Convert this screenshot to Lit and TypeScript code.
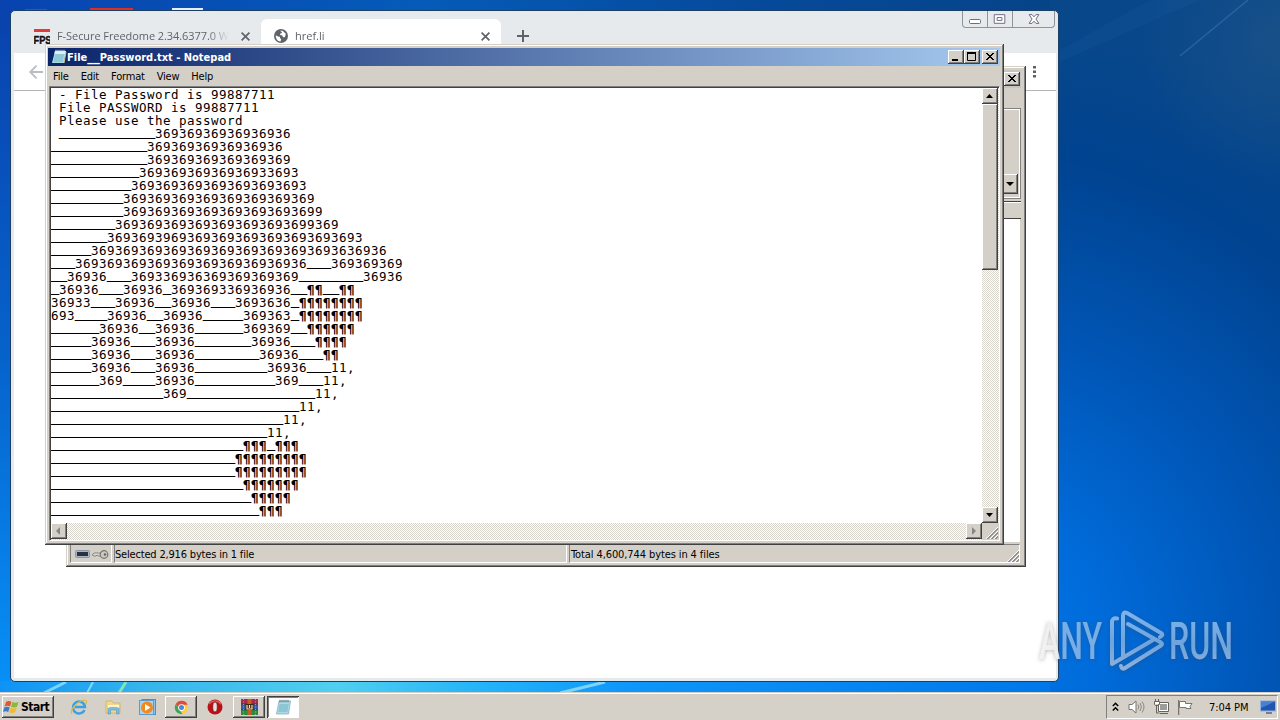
import { LitElement, html, css, svg } from 'lit';
import { customElement, property } from 'lit/decorators.js';
import { classMap } from 'lit/directives/class-map.js';

const u = (n: number) => '_'.repeat(n);
const p = (n: number) => '¶'.repeat(n);

const LINES: string[] = [
  ' - File Password is 99887711',
  ' File PASSWORD is 99887711',
  ' Please use the password',
  ` ${u(12)}36936936936936936`,
  `${u(12)}36936936936936936`,
  `${u(12)}369369369369369369`,
  `${u(11)}36936936936936933693`,
  `${u(10)}3693693693693693693693`,
  `${u(9)}369369369369369369369369`,
  `${u(9)}3693693693693693693693699`,
  `${u(8)}3693693693693693693693699369`,
  `${u(7)}36936939693693693693693693693693`,
  `${u(5)}3693693693693693693693693693693636936`,
  `${u(3)}36936936936936936936936936936${u(3)}369369369`,
  `${u(2)}36936${u(3)}369336936369369369369${u(8)}36936`,
  `_36936${u(3)}36936_369369336936936__${p(2)}__${p(2)}`,
  `36933${u(3)}36936__36936${u(3)}3693636_${p(8)}`,
  `693${u(4)}36936__36936${u(5)}369363_${p(8)}`,
  `${u(6)}36936__36936${u(6)}369369__${p(6)}`,
  `${u(5)}36936${u(3)}36936${u(7)}36936${u(3)}${p(4)}`,
  `${u(5)}36936${u(3)}36936${u(8)}36936${u(3)}${p(2)}`,
  `${u(5)}36936${u(3)}36936${u(9)}36936${u(3)}11,`,
  `${u(6)}369${u(4)}36936${u(10)}369${u(3)}11,`,
  `${u(14)}369${u(16)}11,`,
  `${u(31)}11,`,
  `${u(29)}11,`,
  `${u(27)}11,`,
  `${u(24)}${p(3)}_${p(3)}`,
  `${u(23)}${p(9)}`,
  `${u(23)}${p(9)}`,
  `${u(24)}${p(7)}`,
  `${u(25)}${p(5)}`,
  `${u(26)}${p(3)}`,
];

const classic = css`
  * {
    box-sizing: border-box;
  }
  .raised {
    background: #d4d0c8;
    box-shadow: inset -1px -1px #404040, inset 1px 1px #fff,
      inset -2px -2px #808080;
  }
  .frame {
    background: #d4d0c8;
    box-shadow: inset -1px -1px #404040, inset 1px 1px #d4d0c8,
      inset -2px -2px #808080, inset 2px 2px #fff;
  }
  svg {
    display: block;
    flex: none;
  }
`;

const grip = svg`
  <path d="M4 16L16 4M8 16L16 8M12 16L16 12" stroke="#fff" stroke-width="1" />
  <path d="M5 16L16 5M6 16L16 6M9 16L16 9M10 16L16 10M13 16L16 13M14 16L16 14" stroke="#8c8984" stroke-width=".9" />
`;

@customElement('desktop-wallpaper')
export class DesktopWallpaper extends LitElement {
  static override styles = css`
    :host {
      display: block;
      width: 1280px;
      height: 720px;
    }
    svg {
      display: block;
    }
  `;

  render() {
    return html`
      <svg width="1280" height="720" viewBox="0 0 1280 720">
        <defs>
          <linearGradient id="left" x1="0" y1="0" x2="0" y2="1">
            <stop offset="0" stop-color="#0a41ac" />
            <stop offset=".5" stop-color="#0663cc" />
            <stop offset="1" stop-color="#0795fb" />
          </linearGradient>
          <linearGradient id="top">
            <stop offset="0" stop-color="#0843b0" />
            <stop offset=".4" stop-color="#055bb8" />
            <stop offset=".7" stop-color="#064a9c" />
            <stop offset="1" stop-color="#064488" />
          </linearGradient>
          <linearGradient id="bottom">
            <stop offset="0" stop-color="#0d93f6" />
            <stop offset=".14" stop-color="#36b5ec" />
            <stop offset=".32" stop-color="#50cff0" />
            <stop offset=".46" stop-color="#24b3f8" />
            <stop offset=".6" stop-color="#0e96fa" />
            <stop offset="1" stop-color="#0077e8" />
          </linearGradient>
          <radialGradient id="right" gradientUnits="userSpaceOnUse" cx="960" cy="640" r="620">
            <stop offset="0" stop-color="#0078ea" />
            <stop offset=".22" stop-color="#006cdb" />
            <stop offset=".5" stop-color="#0056b6" />
            <stop offset=".8" stop-color="#004390" />
            <stop offset="1" stop-color="#08478a" />
          </radialGradient>
          <radialGradient id="corner" gradientUnits="userSpaceOnUse" cx="1280" cy="40" r="140">
            <stop offset="0" stop-color="#1c5288" stop-opacity=".8" />
            <stop offset="1" stop-color="#1c5288" stop-opacity="0" />
          </radialGradient>
        </defs>
        <rect width="600" height="720" fill="url(#left)" />
        <rect width="1060" height="11" fill="url(#top)" />
        <rect y="681" width="1050" height="14" fill="url(#bottom)" />
        <rect x="1050" width="230" height="720" fill="url(#right)" />
        <rect x="1130" width="150" height="190" fill="url(#corner)" />
        <path d="M1180 56L1248 0" stroke="#3a78b0" stroke-width="1.5" opacity=".55" />
        <path d="M1060 50L1150 0H1200L1060 62z" fill="#2c6cae" opacity=".12" />
        <path d="M44 693L66 682M560 693L605 682" stroke="#b4f0ff" stroke-width="3" opacity=".65" />
        <path d="M87 693L93 682" stroke="#a8f0ff" stroke-width="2" opacity=".7" />
        <path d="M119 693L126 682" stroke="#9cf0a8" stroke-width="3" opacity=".8" />
        <path d="M90 8h43v3H90z" fill="#dc2f26" />
        <path d="M25 9.500h22" stroke="#37589a" />
        <path d="M172 8h31v2.500h-31z" fill="#e6eef8" />
      </svg>
    `;
  }
}

@customElement('browser-window')
export class BrowserWindow extends LitElement {
  static override styles = css`
    :host,
    * {
      box-sizing: border-box;
    }
    :host {
      display: flex;
      flex-direction: column;
      border: 1px solid #1c3f66;
      border-radius: 5px;
      background: #e7eaed;
      padding: 0 2px 3px 3px;
      overflow: hidden;
      font: 11px 'Open Sans', sans-serif;
      color: #5f6368;
    }
    .strip {
      display: flex;
      height: 42px;
      flex: none;
      padding: 8px 0 0 7px;
    }
    .tab {
      display: flex;
      align-items: center;
      width: 240px;
      height: 34px;
      padding: 0 11px 0 13px;
      border-radius: 6px 6px 0 0;
    }
    .tab.active {
      background: #fff;
    }
    .title {
      flex: 1;
      margin: -2px 12px 0 7px;
      overflow: hidden;
      white-space: nowrap;
      -webkit-mask-image: linear-gradient(90deg, #000 88%, transparent);
    }
    .title.long {
      letter-spacing: -0.07px;
    }
    svg {
      display: block;
      flex: none;
    }
    .plus {
      margin: 11px 0 0 16px;
    }
    .controls {
      display: flex;
      width: 93px;
      height: 17px;
      margin: -8px 1px 0 auto;
      border: 1px solid #8d949e;
      border-top: 0;
      border-radius: 0 0 4px 4px;
    }
    .controls svg + svg {
      border-left: 1px solid #8d949e;
    }
    .toolbar {
      display: flex;
      justify-content: space-between;
      align-items: center;
      flex: none;
      height: 38px;
      padding: 0 20px 0 15px;
      background: #fff;
      border-bottom: 1px solid #b5b5b5;
    }
    .page {
      flex: 1;
      background: #fff;
    }
  `;

  cross() {
    return html`
      <svg width="9" height="9" viewBox="0 0 9 9">
        <path d="M.6.6l7.800 7.800M8.400.6L.6 8.400" stroke="#5f6368" stroke-width="1.700" />
      </svg>
    `;
  }

  render() {
    return html`
      <div class="strip">
        <div class="tab">
          <svg width="16" height="16" viewBox="0 0 16 16">
            <rect width="16" height="3" y="1" fill="#e5383a" />
            <text x="-.5" y="15.500" textLength="18" lengthAdjust="spacingAndGlyphs" font-family="Liberation Sans" font-weight="700" font-size="11" fill="#111" stroke="#111" stroke-width=".4">FPS</text>
          </svg>
          <div class="title long">F-Secure Freedome 2.34.6377.0 Windows</div>
          ${this.cross()}
        </div>
        <div class="tab active">
          <svg width="14" height="14" viewBox="0 0 14 14">
            <circle cx="7" cy="7" r="7" fill="#5f6368" />
            <path d="M1.800 6.200L4 7.500l2 .3v1.500l1.200.8-.6 2.400C3.800 12.300 1.500 9.800 1.800 6.200zM6 1.700l2.600.1 3.200 3-.8 3.200-2 .2-.6-1.600-2.300-.5.2-1.500 1.700-.6-.3-1.100z" fill="#fff" />
          </svg>
          <div class="title">href.li</div>
          ${this.cross()}
        </div>
        <svg class="plus" width="12" height="12" viewBox="0 0 12 12">
          <path d="M6 0v12M0 6h12" stroke="#5f6368" stroke-width="2" />
        </svg>
        <div class="controls">
          <svg width="24" height="16" viewBox="0 0 24 16">
            <rect x="6.500" y="8.500" width="11" height="4" rx="1" fill="#fff" stroke="#696c83" />
          </svg>
          <svg width="25" height="16" viewBox="0 0 25 16">
            <path d="M6.500 3.500h11v9h-11zM9.500 6.500h5v3h-5z" fill="#fff" stroke="#696c83" />
          </svg>
          <svg width="42" height="16" viewBox="0 0 42 16">
            <path d="M16.500 3.500h3l2 2.300 2-2.300h3l-3 4.500 3 4.500h-3l-2-2.300-2 2.300h-3l3-4.500z" fill="#fff" stroke="#696c83" />
          </svg>
        </div>
      </div>
      <div class="toolbar">
        <svg width="14" height="14" viewBox="0 0 14 14">
          <path d="M14 7H1M7.500.7L1.200 7l6.300 6.300" fill="none" stroke="#b9bcc0" stroke-width="1.800" />
        </svg>
        <svg width="3" height="14" viewBox="0 0 3 14">
          <path d="M0 1h3v2.500H0zM0 5.500h3V8H0zM0 10h3v2.500H0z" fill="#5f6368" />
        </svg>
      </div>
      <div class="page"></div>
    `;
  }
}

@customElement('archive-window')
export class ArchiveWindow extends LitElement {
  static override styles = [
    classic,
    css`
      :host {
        display: flex;
        font: 11px 'DejaVu Sans Condensed', 'DejaVu Sans', sans-serif;
        color: #000;
      }
      .frame {
        flex: 1;
        display: flex;
        flex-direction: column;
        padding: 4px 5px 4px 4px;
      }
      .caption {
        display: flex;
        justify-content: flex-end;
        align-items: center;
        height: 18px;
        padding-right: 1px;
        background: #c9c5be;
      }
      .close {
        width: 16px;
        height: 14px;
      }
      .tools {
        height: 91px;
        margin-top: 20px;
        border: 1px solid #808080;
        box-shadow: inset -1px -1px #fff, inset 1px 1px #fff;
        display: flex;
        justify-content: flex-end;
        align-items: flex-end;
        padding: 0 2px 4px 0;
      }
      .drop {
        width: 16px;
        height: 20px;
      }
      .header {
        height: 18px;
        margin-top: 2px;
        border-top: 1px solid #404040;
        border-bottom: 1px solid #404040;
        box-shadow: inset 0 1px #fff;
      }
      .list {
        flex: 1;
        background: #fff;
        border-right: 1px solid #d4d0c8;
      }
      .status {
        display: flex;
        gap: 2px;
        height: 21px;
        margin-right: 1px;
        padding-top: 2px;
      }
      .cell {
        display: flex;
        align-items: center;
        padding-top: 1px;
        border: 1px solid #808080;
        border-right-color: #fff;
        border-bottom-color: #fff;
        letter-spacing: -0.18px;
        white-space: nowrap;
      }
      .icons {
        width: 42px;
        padding-left: 4px;
        gap: 2px;
      }
      .selected {
        width: 453px;
      }
      .total {
        flex: 1;
        justify-content: space-between;
        padding-left: 1px;
        letter-spacing: -0.1px;
      }
    `,
  ];

  render() {
    return html`
      <div class="frame">
        <div class="caption">
          <svg class="close raised" viewBox="0 0 16 14">
            <path d="M4 3l7 7M5 3l7 7M11 3l-7 7M12 3l-7 7" stroke="#000" />
          </svg>
        </div>
        <div class="tools">
          <svg class="drop raised" viewBox="0 0 16 20">
            <path d="M4 8h8l-4 4z" />
          </svg>
        </div>
        <div class="header"></div>
        <div class="list"></div>
        <div class="status">
          <div class="cell icons">
            <svg width="15" height="9" viewBox="0 0 15 9">
              <rect x=".5" y=".5" width="14" height="7" rx="1" fill="#a9b4c6" stroke="#8a95a8" />
              <rect x="2" y="2" width="11" height="4" fill="#27313f" />
            </svg>
            <svg width="18" height="11" viewBox="0 0 18 11">
              <path d="M10 4H2L0 6l2 1h2l1-1 1 1h4z" fill="#d8d8d2" stroke="#77756f" stroke-width=".8" />
              <circle cx="12" cy="5.500" r="3.800" fill="#c9c9c4" stroke="#77756f" stroke-width="1.200" />
              <circle cx="13" cy="5.500" r="1.200" fill="#66645f" />
            </svg>
          </div>
          <div class="cell selected">Selected 2,916 bytes in 1 file</div>
          <div class="cell total">
            Total 4,600,744 bytes in 4 files
            <svg width="14" height="16" viewBox="2 0 14 16">${grip}</svg>
          </div>
        </div>
      </div>
    `;
  }
}

@customElement('notepad-window')
export class NotepadWindow extends LitElement {
  static override styles = [
    classic,
    css`
      :host {
        display: flex;
        font: 11px 'DejaVu Sans Condensed', 'DejaVu Sans', sans-serif;
        color: #000;
      }
      .frame {
        flex: 1;
        display: flex;
        flex-direction: column;
        padding: 4px 4px 4px 3px;
      }
      .caption {
        display: flex;
        align-items: center;
        height: 18px;
        padding: 0 2px 0 3px;
        background: linear-gradient(90deg, #0a246a, #a6caf0);
        color: #fff;
        font-weight: bold;
      }
      .name {
        flex: 1;
        white-space: nowrap;
      }
      .name span {
        font-size: 14px;
        line-height: 0;
      }
      .btn {
        width: 16px;
        height: 14px;
      }
      .btn:last-child {
        margin-left: 2px;
      }
      .menu {
        display: flex;
        align-items: center;
        height: 20px;
        padding-left: 5px;
        gap: 12px;
        letter-spacing: -0.2px;
      }
      .edit {
        flex: 1;
        display: grid;
        grid-template-columns: 1fr 17px;
        grid-template-rows: 1fr 17px;
        margin-left: 1px;
        border: 1px solid #808080;
        border-right-color: #fff;
        border-bottom-color: #fff;
        box-shadow: inset 1px 1px #404040;
        padding: 1px 0 0 1px;
      }
      .text {
        background: #fff;
        overflow: hidden;
        font: 12.5px/13px 'DejaVu Sans Mono', monospace;
        letter-spacing: 0.475px;
      }
      .line {
        height: 13px;
        white-space: pre;
      }
      .rule {
        font: 13.33px/0 'Liberation Mono', monospace;
        letter-spacing: 0;
        vertical-align: 1px;
        -webkit-text-stroke: 0.4px #000;
      }
      .pilcrow {
        font-weight: bold;
      }
      .bar {
        display: flex;
        background: repeating-conic-gradient(#fff 0 25%, #d8d5cd 0 50%) 0 0 / 2px
          2px;
      }
      .bar.v {
        flex-direction: column;
      }
      .bar svg {
        width: 16px;
        height: 16px;
      }
      .bar svg:last-child {
        margin: auto 0 0;
      }
      .bar.h svg:last-child {
        margin: 0 0 0 auto;
      }
      .thumb {
        width: 16px;
        height: 166px;
      }
    `,
  ];

  renderLine(line: string) {
    const runs = line.match(/_+|¶+|[^_¶]+/g) ?? [];
    return html`<div class="line">${runs.map(
      (run) =>
        html`<span
          class=${classMap({ rule: run[0] === '_', pilcrow: run[0] === '¶' })}
          >${run}</span
        >`
    )}</div>`;
  }

  render() {
    return html`
      <div class="frame">
        <div class="caption">
          <svg width="16" height="16" viewBox="0 0 16 16">
            <path d="M4 2h11l-2 12H1z" fill="#a9dbe6" />
            <path d="M4 2h11l-.5 3h-11z" fill="#d9f2f5" />
            <path d="M4 6h9M3.500 8h9M3 10h9M3 12h9" stroke="#62a7ba" stroke-width=".7" />
            <path d="M5 .8v2M7 .8v2M9 .8v2M11 .8v2M13 .8v2" stroke="#e8e8e8" />
            <path d="M13 14l2-11" stroke="#cfc08a" />
          </svg>
          <div class="name">File<span>__</span>Password.txt - Notepad</div>
          <svg class="btn raised" viewBox="0 0 16 14">
            <path d="M4 9h6v2H4z" />
          </svg>
          <svg class="btn raised" viewBox="0 0 16 14">
            <path d="M3.500 2.500h8v8h-8z" fill="none" stroke="#000" />
            <path d="M3 2h9v2H3z" />
          </svg>
          <svg class="btn raised" viewBox="0 0 16 14">
            <path d="M4 3l7 7M5 3l7 7M11 3l-7 7M12 3l-7 7" stroke="#000" />
          </svg>
        </div>
        <div class="menu">
          ${['File', 'Edit', 'Format', 'View', 'Help'].map(
            (item) => html`<span>${item}</span>`
          )}
        </div>
        <div class="edit">
          <div class="text">${LINES.map((line) => this.renderLine(line))}</div>
          <div class="bar v">
            <svg class="raised" viewBox="0 0 16 16">
              <path d="M4 10h7L7.500 6z" />
            </svg>
            <div class="thumb raised"></div>
            <svg class="raised" viewBox="0 0 16 16">
              <path d="M4 6h7L7.500 10z" />
            </svg>
          </div>
          <div class="bar h">
            <svg class="raised" viewBox="0 0 16 16">
              <path d="M9 4v8L5 8z" fill="#858585" />
            </svg>
            <svg class="raised" viewBox="0 0 16 16">
              <path d="M6 4v8l4-4z" fill="#858585" />
            </svg>
          </div>
          <svg width="17" height="17" viewBox="0 0 17 17">${grip}</svg>
        </div>
      </div>
    `;
  }
}

@customElement('task-button')
export class TaskButton extends LitElement {
  static override styles = [
    classic,
    css`
      :host {
        display: block;
      }
      .btn {
        display: flex;
        align-items: center;
        justify-content: center;
        width: 32px;
        height: 22px;
      }
      .pressed {
        background: #fff;
        box-shadow: inset 1px 1px #404040, inset -1px -1px #fff,
          inset 2px 2px #808080;
      }
    `,
  ];

  @property({ type: Boolean }) pressed = false;

  @property({ type: Boolean }) running = false;

  render() {
    return html`
      <div
        class=${classMap({
          btn: true,
          raised: this.running && !this.pressed,
          pressed: this.pressed,
        })}
      >
        <slot></slot>
      </div>
    `;
  }
}

@customElement('task-bar')
export class TaskBar extends LitElement {
  static override styles = [
    classic,
    css`
      :host {
        display: flex;
        align-items: flex-start;
        background: #d5d0c8;
        border-top: 1px solid #d4d0c8;
        box-shadow: inset 0 1px #fff;
        padding: 3px 2px 0;
        font: 11px 'DejaVu Sans Condensed', 'DejaVu Sans', sans-serif;
        color: #000;
      }
      .start {
        display: flex;
        align-items: center;
        gap: 1px;
        width: 52px;
        height: 22px;
        padding-left: 1px;
        font-size: 12px;
        font-weight: bold;
        letter-spacing: -0.5px;
      }
      .apps {
        display: flex;
        gap: 2px;
        padding-left: 9px;
      }
      .tray {
        display: flex;
        align-items: center;
        width: 172px;
        height: 24px;
        margin: -1px 0 0 auto;
        padding: 0 0 0 5px;
        border: 1px solid #808080;
        border-right-color: #fff;
        border-bottom-color: #fff;
      }
      .clock {
        margin: 0 11px 0 16px;
        letter-spacing: -0.05px;
        white-space: nowrap;
      }
      .tray svg + svg {
        margin-left: 8px;
      }
    `,
  ];

  render() {
    return html`
      <div class="start raised">
        <svg width="17" height="16" viewBox="0 0 17 16">
          <path d="M3 3c2-1.500 4-1 5.500 0L7 7.500C5.500 6.500 3.500 6.500 1.500 7.500z" fill="#e4572b" />
          <path d="M9.500 3c2 1 4 1 6 0L14 7.700c-2 1-4 1-6 0z" fill="#86b93c" />
          <path d="M1.200 8.500c2-1 4-1 5.500 0L5.200 13c-1.700-1-3.500-1-5.200 0z" fill="#3b7cc9" />
          <path d="M7.700 8.700c2 1 4 1 6 0l-1.500 4.600c-2 1-4 1-6 0z" fill="#f3b929" />
        </svg>
        Start
      </div>
      <div class="apps">
        <task-button>
          <svg width="18" height="18" viewBox="0 0 18 18">
            <path d="M14.500 12A6 6 0 1 1 15 9H5" fill="none" stroke="#3ba1e0" stroke-width="2.400" />
            <path d="M2 16C-1 12 8 3 14 2c3 0 3 2 2 4" fill="none" stroke="#e3b93c" stroke-width="1.200" />
          </svg>
        </task-button>
        <task-button>
          <svg width="17" height="16" viewBox="0 0 17 16">
            <path d="M1 2h6l1 2h7v10H1z" fill="#f1d88c" stroke="#cfae58" stroke-width=".7" />
            <path d="M3 6h11v3H3z" fill="#fff6cf" />
            <path d="M3 15V9.500C3 8 14 8 14 9.500V15h-2.500v-4h-6v4z" fill="#7cbfe6" stroke="#4f93c2" stroke-width=".6" />
          </svg>
        </task-button>
        <task-button>
          <svg width="17" height="17" viewBox="0 0 17 17">
            <rect x="3" y=".5" width="13.500" height="15" fill="#8fc4ec" stroke="#4c8fc8" />
            <rect x=".5" y="1.500" width="14" height="14" fill="#a9d3f2" stroke="#5a9bd0" />
            <circle cx="8" cy="8.500" r="6" fill="#f08a1d" />
            <path d="M6 5l5.500 3.500L6 12z" fill="#fff" />
          </svg>
        </task-button>
        <task-button running>
          <svg width="15" height="15" viewBox="0 0 16 16">
            <circle cx="8" cy="8" r="7" fill="#f9cf3b" />
            <path d="M2 4.300A7 7 0 0 1 14.500 5H8L5 9.500z" fill="#de4b3c" />
            <path d="M2 4.300L5.300 10 9 15A7 7 0 0 1 2 4.300z" fill="#3ba45b" />
            <circle cx="8" cy="8" r="3.600" fill="#fff" />
            <circle cx="8" cy="8" r="2.700" fill="#4a87e0" />
          </svg>
        </task-button>
        <task-button>
          <svg width="16" height="16" viewBox="0 0 16 16">
            <circle cx="8" cy="8" r="7.500" fill="#b81218" />
            <path d="M2 5a7 6 0 0 1 12 0" fill="none" stroke="#d95a58" stroke-width="1.500" />
            <ellipse cx="8" cy="8" rx="2.300" ry="5" fill="#e8e0de" stroke="#650a0c" stroke-width=".7" />
          </svg>
        </task-button>
        <task-button running>
          <svg width="17" height="16" viewBox="0 0 17 16">
            <path d="M0 0h17v5H0z" fill="#a8284e" />
            <path d="M0 5.500h17v5H0z" fill="#3a55b0" />
            <path d="M0 11h17v5H0z" fill="#2f8a3d" />
            <path d="M0 5.300h17M0 10.700h17" stroke="#1d1d2a" stroke-width=".8" />
            <path d="M6.500 0h4v16h-4z" fill="#c95c1e" />
            <path d="M4.500 5h8v6h-8z" fill="#3a2810" />
            <path d="M6 6v4h5V6M8.500 6v3" fill="none" stroke="#f0e2b8" stroke-width="1.200" />
            <path d="M2.500 0v16M14.500 0v16" stroke="#e0c860" stroke-width=".7" stroke-dasharray="1 1.500" />
          </svg>
        </task-button>
        <task-button pressed>
          <svg width="17" height="17" viewBox="0 0 17 17">
            <path d="M4 2h11.500l-2 13H1.500z" fill="#a9dbe6" stroke="#7b9ca5" stroke-width=".6" />
            <path d="M4.500 6h9M4 8h9M4 10h9M3.500 12h9" stroke="#5c9fb3" stroke-width=".7" />
            <path d="M5 .8v2.500M7 .8v2.500M9 .8v2.500M11 .8v2.500M13 .8v2.500" stroke="#56707a" stroke-width=".9" />
          </svg>
        </task-button>
      </div>
      <div class="tray">
        <svg width="7" height="10" viewBox="0 0 7 10">
          <path d="M.8 4L3.500 1.300 6.200 4M.8 8.500l2.700-2.700 2.700 2.700" fill="none" stroke="#000" stroke-width="1.500" />
        </svg>
        <svg width="18" height="14" viewBox="-1 0 18 14">
          <path d="M1 4.500h3L8 1v12L4 9.500H1z" fill="#fff" stroke="#77756f" />
          <path d="M10 4.500q1.500 2.500 0 5M12 3q2.800 4 0 8M14 1.500q4 5.500 0 11" fill="none" stroke="#8c8a85" />
        </svg>
        <svg width="17" height="16" viewBox="0 0 17 16">
          <path d="M5.500 3.500h10v9h-10z" fill="#fff" stroke="#66645f" />
          <path d="M7 5h7v6H7z" fill="#9c9c9a" />
          <path d="M7 14.500h8M1.500 2.500h5v3l-1 1h-3l-1-1zM2.500 0v2M5.500 0v2M3.500 7v7h3" fill="none" stroke="#66645f" />
          <path d="M2 3h4v2H2z" fill="#fff" />
        </svg>
        <svg width="15" height="15" viewBox="1 0 15 15">
          <path d="M1.500 0v15" stroke="#77756f" stroke-width="1.500" />
          <path d="M2.500 1.500h6v2h6.500l-2 3 1 2h-5v-1h-6.500z" fill="#fff" stroke="#77756f" />
        </svg>
        <span class="clock">7:04 PM</span>
        <svg width="17" height="14" viewBox="0 0 17 14">
          <rect x=".5" y="1" width="15" height="10" fill="#1f56b0" stroke="#8eb2dc" />
          <path d="M1 1.500h14L1 8z" fill="#5d93da" opacity=".7" />
          <path d="M6 13h6" stroke="#55627c" stroke-width="1.500" />
        </svg>
      </div>
    `;
  }
}

@customElement('app-root')
export class AppRoot extends LitElement {
  static override styles = css`
    :host {
      display: block;
      position: relative;
      width: 1280px;
      height: 720px;
      overflow: hidden;
    }
    browser-window {
      position: absolute;
      left: 10px;
      top: 10px;
      width: 1049px;
      height: 672px;
    }
    archive-window {
      position: absolute;
      left: 66px;
      top: 66px;
      width: 960px;
      height: 501px;
    }
    notepad-window {
      position: absolute;
      left: 45px;
      top: 44px;
      width: 959px;
      height: 501px;
    }
    task-bar {
      position: absolute;
      left: 0;
      bottom: 0;
      width: 1280px;
      height: 28px;
      box-sizing: border-box;
    }
    .watermark {
      position: absolute;
      left: 1030px;
      top: 604px;
      filter: drop-shadow(0 1px 2px rgba(60, 60, 60, 0.35));
    }
  `;

  render() {
    return html`
      <desktop-wallpaper></desktop-wallpaper>
      <browser-window></browser-window>
      <archive-window></archive-window>
      <notepad-window></notepad-window>
      <svg class="watermark" width="240" height="76" viewBox="0 0 240 76">
        <defs>
          <linearGradient id="ink" x1="0" y1="0" x2="0" y2="1">
            <stop offset="0" stop-color="#7db4ec" />
            <stop offset=".55" stop-color="#6ea4de" />
            <stop offset="1" stop-color="#8fb0d8" />
          </linearGradient>
          <linearGradient id="ink-left" x1="0" x2="1">
            <stop offset="0" stop-color="#f3f3f3" />
            <stop offset=".3" stop-color="#ececec" />
            <stop offset=".34" stop-color="#78aee6" />
          </linearGradient>
        </defs>
        <g font-family="Roboto" font-size="52" font-weight="500">
          <text x="9" y="55" textLength="63" lengthAdjust="spacingAndGlyphs" fill="url(#ink-left)">ANY</text>
          <text x="139" y="55" textLength="64" lengthAdjust="spacingAndGlyphs" fill="url(#ink)">RUN</text>
        </g>
        <path d="M87 14.500q-5-1-5 4V60L123 36M93 53V12q0-5 4-3l34 20q3 2-1 4M98 20l33 18.500q2 1.500 0 3L95 64q-3 2-4-2" fill="none" stroke="url(#ink)" stroke-width="4" stroke-linejoin="round" stroke-linecap="round" />
      </svg>
      <task-bar></task-bar>
    `;
  }
}
